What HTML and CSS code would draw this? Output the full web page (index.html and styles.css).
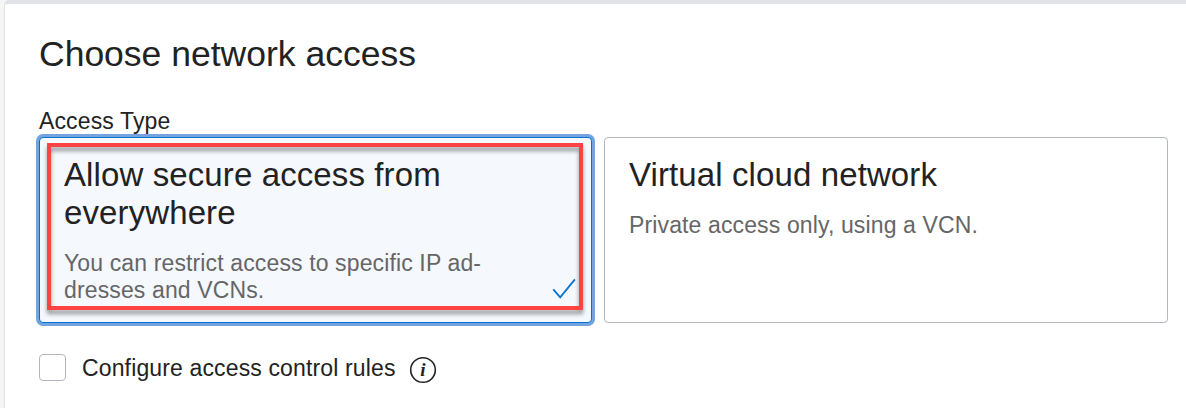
FILE: index.html
```html
<!DOCTYPE html>
<html lang="en">
<head>
<meta charset="utf-8">
<title>Choose network access</title>
<link rel="stylesheet" href="styles.css">
</head>
<body>
<main class="panel">
  <h1 class="heading"><span>Choose network access</span></h1>
  <div class="label"><span>Access Type</span></div>
  <div class="options">
    <section class="option selected">
      <h2 class="option-title">Allow secure access from<br>everywhere</h2>
      <p class="option-text">You can restrict access to specific IP ad-<br>dresses and VCNs.</p>
      <svg class="check" width="24" height="22" viewBox="0 0 24 22"><path d="M1.3 11.3 8.2 19.3 22.9 1.4" fill="none" stroke="#0572ce" stroke-width="1.8"/></svg>
      <div class="highlight"></div>
    </section>
    <section class="option plain">
      <h2 class="option-title">Virtual cloud network</h2>
      <p class="option-text">Private access only, using a VCN.</p>
    </section>
  </div>
  <div class="rules">
    <span class="checkbox"></span>
    <span class="rules-label">Configure access control rules</span>
    <svg class="info" width="28" height="28" viewBox="0 0 28 28"><circle cx="14" cy="14" r="12.3" fill="none" stroke="#222" stroke-width="1.6"/><text x="14" y="19.6" text-anchor="middle">i</text></svg>
  </div>
</main>
</body>
</html>
```
FILE: styles.css
```css
* { box-sizing: border-box; }
body {
  margin: 0;
  height: 408px;
  padding-left: 4px;
  overflow: hidden;
  background: #f5f5f5;
  color: #222;
  font-family: "Liberation Sans", Arial, sans-serif;
}
h1, h2, p { margin: 0; font-weight: 400; }
.panel {
  height: 420px;
  padding: 30px 18px 0 34px;
  background: #fff;
  border-top: 4px solid #e1e2e7;
  border-left: 1px solid #e1e2e7;
  border-top-left-radius: 5px;
}
.heading { height: 74px; font-size: 35.5px; line-height: 40px; }
.label { height: 29px; font-size: 23px; line-height: 26px; letter-spacing: .13px; }
.options { display: grid; grid-template-columns: 553px 564px; column-gap: 12px; height: 186px; }
.option { position: relative; padding: 18px 24px 0; border: 1px solid #b3b7c1; border-radius: 4px; }
.selected { background: #f5f8fd; border-color: #0572ce; box-shadow: 0 0 0 3px #73a4e0; }
.option-title { font-size: 33px; line-height: 38px; letter-spacing: .11px; white-space: nowrap; }
.option-text { margin-top: 18px; color: #666; font-size: 23px; line-height: 27px; letter-spacing: .13px; white-space: nowrap; }
.check { position: absolute; left: 512px; top: 140px; }
.highlight {
  position: absolute;
  left: 7px; top: 5px;
  width: 536px; height: 167px;
  border: 4px solid #ff4242;
  filter: drop-shadow(0 4px 2px rgba(0, 0, 0, .4));
}
.rules { display: flex; margin-top: 31px; }
.checkbox { width: 27px; height: 27px; border: 1px solid #b3b7c1; border-radius: 4px; }
.rules-label { margin-left: 16px; font-size: 23px; line-height: 28px; letter-spacing: .14px; }
.info { margin: 2px 0 0 13px; }
.info text { fill: #222; font: italic bold 19px "Liberation Serif", serif; }
```
